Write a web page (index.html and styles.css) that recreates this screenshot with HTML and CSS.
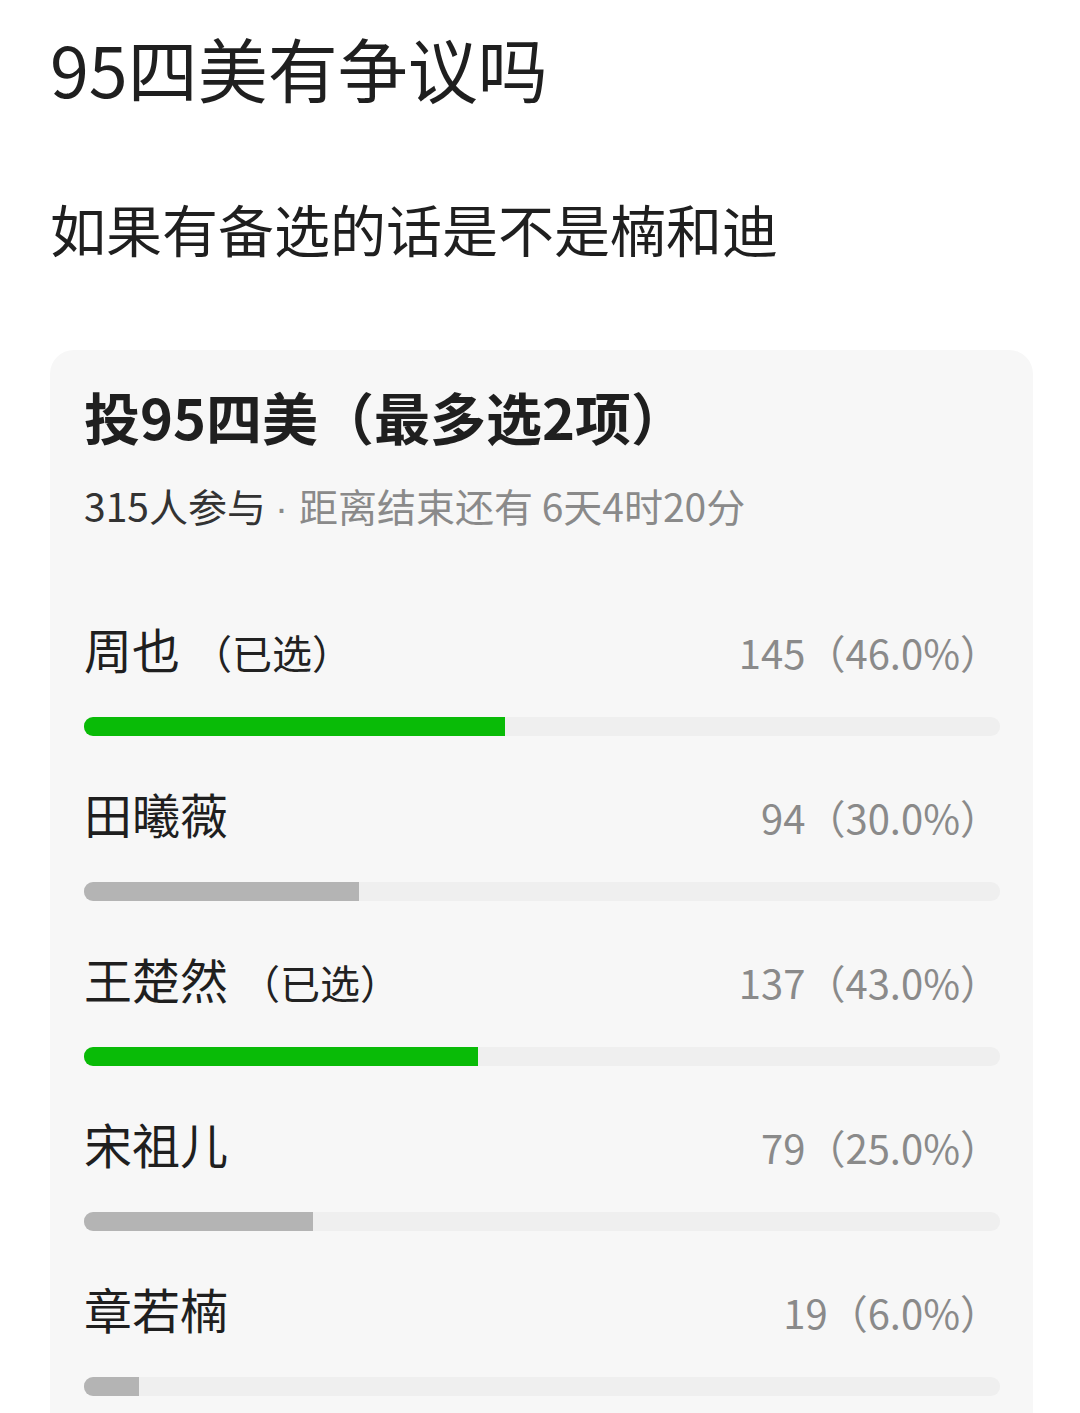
FILE: index.html
```html
<!doctype html>
<html lang="zh-CN">
    <head>
        <meta charset="UTF-8" />
        <meta name="viewport" content="width=device-width, initial-scale=1.0" />
        <title>95四美有争议吗</title>
        <link rel="stylesheet" href="styles.css">
    </head>
    <body>
        <div class="post">
            <h1 class="post-title">95四美有争议吗</h1>
            <p class="post-text">如果有备选的话是不是楠和迪</p>

            <div class="poll">
                <h2 class="poll-title">投95四美（最多选2项）</h2>
                <div class="poll-meta">
                    <span class="joined">315人参与</span><span class="dot">·</span>距离结束还有 6天4时20分
                </div>

                <div class="option">
                    <div class="option-head">
                        <span class="option-name">周也<span class="picked">（已选）</span></span>
                        <span class="option-count">145（46.0%）</span>
                    </div>
                    <div class="track"><div class="fill fill-on" style="width: 46%"></div></div>
                </div>

                <div class="option">
                    <div class="option-head">
                        <span class="option-name">田曦薇</span>
                        <span class="option-count">94（30.0%）</span>
                    </div>
                    <div class="track"><div class="fill" style="width: 30%"></div></div>
                </div>

                <div class="option">
                    <div class="option-head">
                        <span class="option-name">王楚然<span class="picked">（已选）</span></span>
                        <span class="option-count">137（43.0%）</span>
                    </div>
                    <div class="track"><div class="fill fill-on" style="width: 43%"></div></div>
                </div>

                <div class="option">
                    <div class="option-head">
                        <span class="option-name">宋祖儿</span>
                        <span class="option-count">79（25.0%）</span>
                    </div>
                    <div class="track"><div class="fill" style="width: 25%"></div></div>
                </div>

                <div class="option">
                    <div class="option-head">
                        <span class="option-name">章若楠</span>
                        <span class="option-count">19（6.0%）</span>
                    </div>
                    <div class="track"><div class="fill" style="width: 6%"></div></div>
                </div>
            </div>
        </div>
    </body>
</html>
```

FILE: styles.css
```css
body {
    margin: 0;
    background-color: #fff;
    color: #1f1f1f;
    font-family: "Noto Sans CJK SC", "Noto Sans", sans-serif;
}
.post {
    padding: 33px 47px 0 50px;
}
.post-title {
    margin: 0;
    font-size: 70px;
    font-weight: 400;
    line-height: 1;
}
.post-text {
    margin: 97px 0 0;
    font-size: 56px;
    line-height: 1;
}
.poll {
    margin-top: 94px;
    background-color: #f7f7f7;
    border-radius: 24px;
    padding: 38px 33px 60px 34px;
}
.poll-title {
    margin: 0;
    font-size: 56px;
    font-weight: 700;
    line-height: 1;
}
.poll-meta {
    margin-top: 42px;
    font-size: 39px;
    line-height: 1;
    color: #8a8a8a;
}
.joined {
    color: #333;
}
.dot {
    font-family: "Liberation Sans", sans-serif;
    margin: 0 11px 0 9px;
}
.option {
    margin-top: 96px;
}
.option + .option {
    margin-top: 53px;
}
.option-head {
    display: flex;
    justify-content: space-between;
    align-items: flex-end;
    line-height: 1;
}
.option-name {
    font-size: 48px;
}
.picked {
    margin-left: 12px;
    font-size: 40px;
    color: #222;
}
.option-count {
    font-size: 40px;
    color: #8a8a8a;
}
.track {
    margin-top: 45px;
    height: 19px;
    background-color: #efefef;
    border-radius: 9px;
    overflow: hidden;
}
.fill {
    height: 100%;
    background-color: #b4b4b4;
}
.fill-on {
    background-color: #09bb07;
}
```
